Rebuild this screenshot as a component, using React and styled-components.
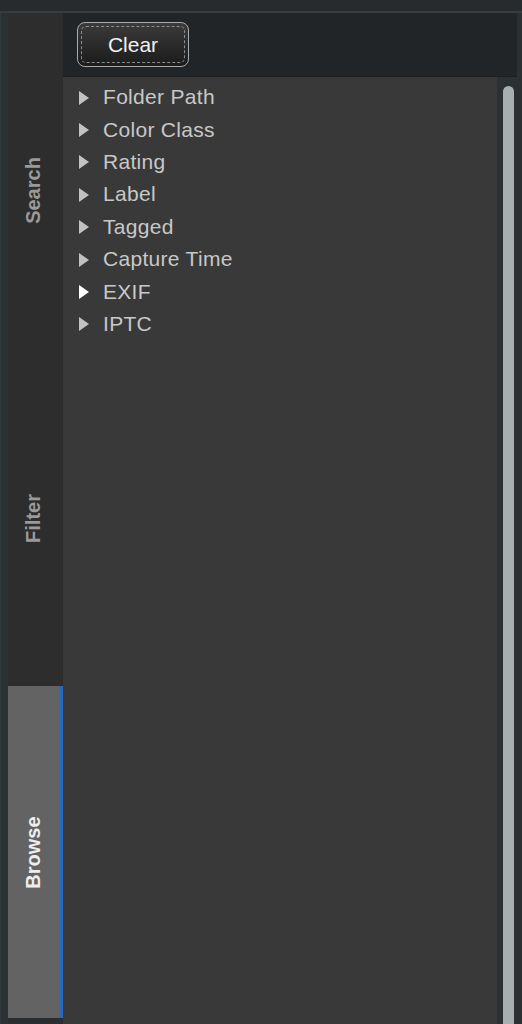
import styled, { createGlobalStyle } from "styled-components";

const GlobalStyle = createGlobalStyle`
  html, body {
    margin: 0;
    padding: 0;
    background: #2b3033;
    font-family: "Liberation Sans", Arial, sans-serif;
  }
`;

const Frame = styled.div`
  width: 522px;
  height: 1024px;
  display: flex;
  flex-direction: column;
  background: #2b3033;
  overflow: hidden;
`;

const TopBar = styled.div`
  height: 11px;
  flex: none;
  background: #272b2d;
  border-bottom: 2px solid #383d40;
`;

const Body = styled.div`
  flex: 1;
  display: flex;
  min-height: 0;
  padding-left: 7px;
  padding-right: 5px;
  border-left: 1px solid #353a3d;
`;

const TabColumn = styled.div`
  width: 55px;
  flex: none;
  display: flex;
  flex-direction: column;
  background: #2d2d2d;
  padding-bottom: 6px;
  box-shadow: inset 0 -6px 0 #2a2e30;
`;

const Tab = styled.div`
  flex: ${(p) => (p.$size ? `0 0 ${p.$size}px` : "1")};
  box-sizing: border-box;
  display: flex;
  align-items: center;
  justify-content: center;
  padding-top: ${(p) => p.$shift || 0}px;
  background: ${(p) => (p.$active ? "#636363" : "transparent")};
  border-right: 4px solid ${(p) => (p.$active ? "#2c69bd" : "transparent")};
`;

const TabLabel = styled.span`
  transform: rotate(-90deg);
  white-space: nowrap;
  font-size: 20px;
  font-weight: bold;
  color: ${(p) => (p.$active ? "#ededed" : "#9a9a9a")};
`;

const Main = styled.div`
  flex: 1;
  display: flex;
  flex-direction: column;
  min-width: 0;
`;

const Header = styled.div`
  height: 64px;
  flex: none;
  box-sizing: border-box;
  background: #222527;
  padding: 9px 14px;
  border-bottom: 1px solid #1c1e20;
`;

const ClearButton = styled.button`
  position: relative;
  width: 112px;
  height: 45px;
  border-radius: 8px;
  border: 1px solid #a7a9aa;
  background: linear-gradient(#3b3b3b, #1b1b1b);
  color: #f2f2f2;
  font-family: "Liberation Sans", Arial, sans-serif;
  font-size: 21px;
  padding: 0;
  cursor: pointer;

  &::after {
    content: "";
    position: absolute;
    inset: 3px;
    border: 1px dashed #8a8c8d;
    border-radius: 5px;
  }
`;

const ListArea = styled.div`
  flex: 1;
  display: flex;
  background: #393939;
  min-height: 0;
`;

const List = styled.ul`
  flex: 1;
  list-style: none;
  margin: 0;
  padding: 4px 0 0 16px;
`;

const Row = styled.li`
  height: 32.4px;
  display: flex;
  align-items: center;
  gap: 14px;
  font-size: 21px;
  letter-spacing: 0.3px;
  color: #c8c8c8;
`;

const Arrow = styled.span`
  width: 0;
  height: 0;
  margin-top: 1px;
  border-top: 7px solid transparent;
  border-bottom: 7px solid transparent;
  border-left: 10px solid ${(p) => (p.$bright ? "#ffffff" : "#c2c2c2")};
`;

const ScrollTrack = styled.div`
  width: 20px;
  flex: none;
  background: #2b3033;
  padding: 9px 3px 0 6px;
  box-sizing: border-box;
  display: flex;
`;

const Thumb = styled.div`
  flex: 1;
  background: #a9aeb0;
  border-radius: 6px 6px 0 0;
`;

const items = [
  "Folder Path",
  "Color Class",
  "Rating",
  "Label",
  "Tagged",
  "Capture Time",
  "EXIF",
  "IPTC",
];

export default function App() {
  return (
    <>
      <GlobalStyle />
      <Frame>
        <TopBar />
        <Body>
          <TabColumn>
            <Tab $size={337} $shift={17}>
              <TabLabel>Search</TabLabel>
            </Tab>
            <Tab $size={336}>
              <TabLabel>Filter</TabLabel>
            </Tab>
            <Tab $active>
              <TabLabel $active>Browse</TabLabel>
            </Tab>
          </TabColumn>
          <Main>
            <Header>
              <ClearButton>Clear</ClearButton>
            </Header>
            <ListArea>
              <List>
                {items.map((name) => (
                  <Row key={name}>
                    <Arrow $bright={name === "EXIF"} />
                    {name}
                  </Row>
                ))}
              </List>
              <ScrollTrack>
                <Thumb />
              </ScrollTrack>
            </ListArea>
          </Main>
        </Body>
      </Frame>
    </>
  );
}
